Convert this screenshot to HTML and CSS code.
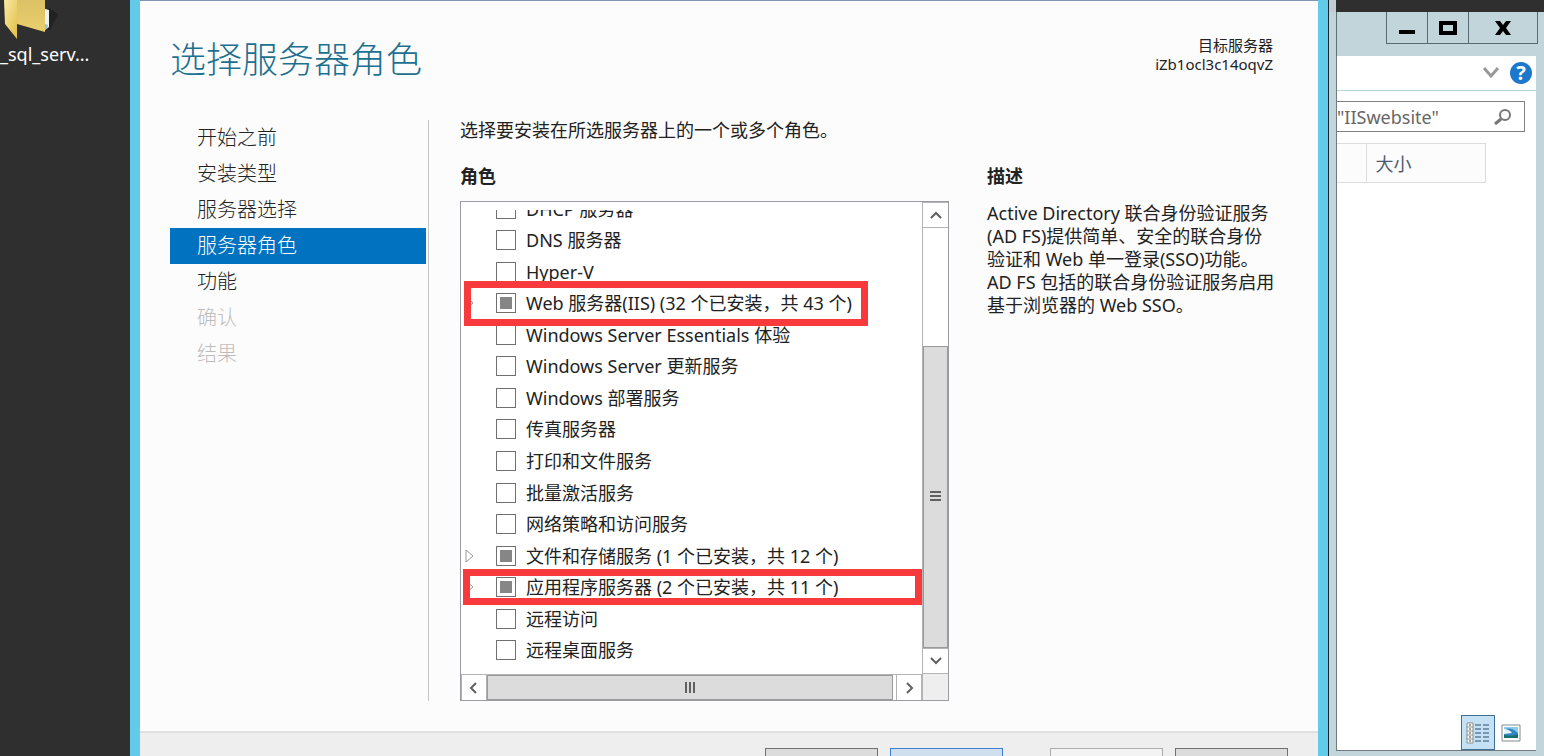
FILE: index.html
```html
<!DOCTYPE html>
<html lang="zh-CN">
<head>
    <meta charset="UTF-8">
    <meta name="viewport" content="width=device-width, initial-scale=1.0">
    <title>选择服务器角色</title>
    <link rel="stylesheet" href="styles.css">
</head>
<body>
    <aside class="desktop">
        <a href="#" class="shortcut">
            <svg width="64" height="40" viewBox="0 0 64 40" aria-hidden="true">
                <defs>
                    <linearGradient id="front" x1="0" y1="0" x2="1" y2="1">
                        <stop offset="0" stop-color="#f9eaa4"/>
                        <stop offset="1" stop-color="#e3bd45"/>
                    </linearGradient>
                    <linearGradient id="back" x1="0" y1="0" x2="0" y2="1">
                        <stop offset="0" stop-color="#dcc067"/>
                        <stop offset="1" stop-color="#ead06c"/>
                    </linearGradient>
                </defs>
                <path d="M49 8l9 6-8 16-20-3z" fill="#222"/>
                <path d="M42 8l7 2v17l-4 3-3-1z" fill="#edf2f2"/>
                <path d="M45 24l3 1-1 4-3 1z" fill="#8fc4d6"/>
                <path d="M17 0h28v32l-28-8z" fill="url(#back)"/>
                <path d="M4 0h13v39L5 24z" fill="url(#front)"/>
            </svg>
            <span>_sql_serv...</span>
        </a>
    </aside>

    <main class="wizard">
        <header class="wizard-header">
            <h1>选择服务器角色</h1>
            <p class="target">目标服务器<br>iZb1ocl3c14oqvZ</p>
        </header>

        <div class="wizard-body">
            <nav class="steps">
                <a href="#">开始之前</a>
                <a href="#">安装类型</a>
                <a href="#">服务器选择</a>
                <a href="#" class="active">服务器角色</a>
                <a href="#">功能</a>
                <a class="disabled">确认</a>
                <a class="disabled">结果</a>
            </nav>

            <section class="roles">
                <p class="intro">选择要安装在所选服务器上的一个或多个角色。</p>
                <h2>角色</h2>
                <div class="role-box">
                    <div class="role-view">
                        <ul class="role-list">
                            <li><label><input type="checkbox">DHCP 服务器</label></li>
                            <li><label><input type="checkbox">DNS 服务器</label></li>
                            <li><label><input type="checkbox">Hyper-V</label></li>
                            <li>
                                <svg class="expander" width="10" height="16" viewBox="0 0 10 16"><path d="M1 2v12l7-6z"/></svg>
                                <label><input type="checkbox" class="partial">Web 服务器(IIS) (32 个已安装，共 43 个)</label>
                                <span class="mark mark-web"></span>
                            </li>
                            <li><label><input type="checkbox">Windows Server Essentials 体验</label></li>
                            <li><label><input type="checkbox">Windows Server 更新服务</label></li>
                            <li><label><input type="checkbox">Windows 部署服务</label></li>
                            <li><label><input type="checkbox">传真服务器</label></li>
                            <li><label><input type="checkbox">打印和文件服务</label></li>
                            <li><label><input type="checkbox">批量激活服务</label></li>
                            <li><label><input type="checkbox">网络策略和访问服务</label></li>
                            <li>
                                <svg class="expander" width="10" height="16" viewBox="0 0 10 16"><path d="M1 2v12l7-6z"/></svg>
                                <label><input type="checkbox" class="partial">文件和存储服务 (1 个已安装，共 12 个)</label>
                            </li>
                            <li>
                                <svg class="expander" width="10" height="16" viewBox="0 0 10 16"><path d="M1 2v12l7-6z"/></svg>
                                <label><input type="checkbox" class="partial">应用程序服务器 (2 个已安装，共 11 个)</label>
                                <span class="mark mark-app"></span>
                            </li>
                            <li><label><input type="checkbox">远程访问</label></li>
                            <li><label><input type="checkbox">远程桌面服务</label></li>
                        </ul>
                    </div>
                    <div class="scroll-v">
                        <button type="button" aria-label="向上滚动"><svg width="14" height="14" viewBox="0 0 14 14"><path d="M2 10l5-5 5 5"/></svg></button>
                        <div class="track"><div class="thumb"><svg width="12" height="13" viewBox="0 0 12 13"><path d="M0 2h11M0 6h11M0 10h11"/></svg></div></div>
                        <button type="button" aria-label="向下滚动"><svg width="14" height="14" viewBox="0 0 14 14"><path d="M2 4l5 5 5-5"/></svg></button>
                    </div>
                    <div class="scroll-h">
                        <button type="button" aria-label="向左滚动"><svg width="14" height="14" viewBox="0 0 14 14"><path d="M9 2L4 7l5 5"/></svg></button>
                        <div class="track"><div class="thumb"><svg width="13" height="12" viewBox="0 0 13 12"><path d="M2 0v11M6 0v11M10 0v11"/></svg></div></div>
                        <button type="button" aria-label="向右滚动"><svg width="14" height="14" viewBox="0 0 14 14"><path d="M5 2l5 5-5 5"/></svg></button>
                    </div>
                    <div class="scroll-corner"></div>
                </div>
            </section>

            <section class="description">
                <h2>描述</h2>
                <p>Active Directory 联合身份验证服务<br>(AD FS)提供简单、安全的联合身份<br>验证和 Web 单一登录(SSO)功能。<br>AD FS 包括的联合身份验证服务启用<br>基于浏览器的 Web SSO。</p>
            </section>
        </div>

        <footer class="wizard-footer">
            <button type="button" aria-label="上一步"></button>
            <button type="button" class="primary" aria-label="下一步"></button>
            <button type="button" class="install" aria-label="安装" disabled></button>
            <button type="button" aria-label="取消"></button>
        </footer>
    </main>

    <aside class="explorer">
        <div class="titlebar">
            <button type="button" aria-label="最小化"><svg width="18" height="16" viewBox="0 0 18 16"><path d="M1 12h16" stroke="#000" stroke-width="4"/></svg></button>
            <button type="button" aria-label="最大化"><svg width="18" height="16" viewBox="0 0 18 16"><path d="M2 3h14v10H2z" fill="none" stroke="#000" stroke-width="4"/></svg></button>
            <button type="button" class="close" aria-label="关闭"><svg width="18" height="16" viewBox="0 0 18 16"><path d="M1 1h5l3 4 3-4h5l-5 7 5 7h-5l-3-4-3 4H1l5-7z"/></svg></button>
        </div>
        <div class="window">
            <div class="ribbon">
                <svg width="18" height="14" viewBox="0 0 18 14"><path d="M2 2l7 8 7-8" fill="none" stroke="#999" stroke-width="3"/></svg>
                <button type="button" class="help" aria-label="帮助">?</button>
            </div>
            <div class="search">
                <input type="text" aria-label="搜索" value="&quot;IISwebsite&quot;">
                <svg width="18" height="18" viewBox="0 0 18 18"><circle cx="11" cy="7" r="5" fill="none" stroke="#777" stroke-width="2"/><path d="M7 11l-6 5" stroke="#777" stroke-width="3"/></svg>
            </div>
            <table class="columns">
                <tr><th></th><th>大小</th></tr>
            </table>
            <div class="views">
                <button type="button" class="selected" aria-label="详细信息">
                    <svg width="24" height="22" viewBox="0 0 24 22">
                        <path d="M1 1h6v20H1z" fill="#fff" stroke="#8a8f86"/>
                        <path d="M1 5h6M1 9h6M1 13h6M1 17h6" stroke="#8a8f86"/>
                        <path d="M3 3h2M3 7h2M3 11h2M3 15h2M3 19h2" stroke="#444"/>
                        <path d="M9 3h6M17 3h6M9 7h6M17 7h6M9 11h6M17 11h6M9 15h6M17 15h6M9 19h6M17 19h6" stroke="#2f4c68"/>
                    </svg>
                </button>
                <button type="button" aria-label="大图标">
                    <svg width="20" height="18" viewBox="0 0 20 18">
                        <path d="M1 1h18v16H1z" fill="#fff" stroke="#848a90"/>
                        <path d="M3 3h14v11H3z" fill="#3287c0"/>
                        <path d="M3 6q6-4 14 3V3H3z" fill="#8dcbed"/>
                        <path d="M3 5q5 0 8 4l-8 1z" fill="#e8f7fc"/>
                        <path d="M3 14v-3q8 2 14-1v4z" fill="#18716d"/>
                    </svg>
                </button>
            </div>
        </div>
    </aside>
</body>
</html>
```
FILE: styles.css
```css
* {
    box-sizing: border-box;
}
body {
    margin: 0;
    height: 100vh;
    overflow: hidden;
    display: flex;
    background-color: #2f2f2f;
    color: #222;
    font-family: "Noto Sans", "Noto Sans CJK SC", sans-serif;
    font-size: 18px;
    font-weight: 400;
}
h1, h2, p, ul {
    margin: 0;
    padding: 0;
}
button {
    padding: 0;
    font: inherit;
}

/* desktop strip */
.desktop {
    flex: 0 0 130px;
}
.shortcut {
    display: block;
    color: #fff;
    text-decoration: none;
    line-height: 28px;
}
.shortcut svg {
    display: block;
}

/* wizard window */
.wizard {
    flex: 1;
    min-width: 0;
    display: flex;
    flex-direction: column;
    background-color: #fcfcfc;
    border: solid #62cbea;
    border-width: 0 10px;
    box-shadow: inset 0 1px #8296b4;
}
.wizard-header {
    flex: 0 0 120px;
    display: flex;
    justify-content: space-between;
    padding: 36px 45px 0 30px;
}
h1 {
    color: #1d7090;
    font-size: 36px;
    line-height: 48px;
    font-weight: 300;
}
.target {
    text-align: right;
    font-size: 15px;
    line-height: 19px;
}
.wizard-body {
    display: flex;
    padding: 0 30px;
}
.steps {
    flex: 0 0 259px;
    display: flex;
    flex-direction: column;
    padding-right: 2px;
    border-right: 1px solid #c4c4c4;
    font-size: 20px;
    font-weight: 300;
    line-height: 36px;
}
.steps a {
    padding-left: 27px;
    color: #222;
    text-decoration: none;
}
.steps .active {
    background-color: #0072c0;
    color: #fff;
}
.steps .disabled {
    color: #bcbcbc;
}
.roles {
    flex: 0 1 489px;
    margin-left: 31px;
}
.intro {
    line-height: 20px;
}
h2 {
    font-size: 18px;
    line-height: 28px;
    font-weight: 700;
}
.roles h2 {
    margin: 22px 0 11px;
}
.role-box {
    display: grid;
    grid-template-columns: minmax(0, 1fr) 26px;
    grid-template-rows: 464px 26px;
    padding-top: 8px;
    border: 1px solid #9a9ca2;
    background-color: #fff;
}
.role-view {
    display: flex;
    flex-direction: column;
    justify-content: flex-end;
    padding-bottom: 8px;
    overflow: hidden;
}
.role-list {
    display: grid;
    grid-auto-rows: 1fr;
    flex: 0 0 473px;
    list-style: none;
}
.role-list li {
    position: relative;
    display: flex;
    align-items: center;
    padding-left: 35px;
    white-space: nowrap;
}
.role-list label {
    display: flex;
    align-items: center;
    gap: 10px;
    line-height: 24px;
}
.role-list input {
    appearance: none;
    display: grid;
    place-items: center;
    width: 20px;
    height: 20px;
    margin: 0;
    border: 1px solid #707070;
    background-color: #fff;
}
.role-list .partial::before {
    content: "";
    width: 12px;
    height: 12px;
    background-color: #868686;
}
.expander {
    position: absolute;
    left: 4px;
    fill: #fff;
    stroke: #999;
}
.mark {
    position: absolute;
    z-index: 1;
    border: 7px solid #f83a3c;
}
.mark-web {
    inset: -7px 54px -7px 3px;
}
.mark-app {
    inset: -2px 0 -2px 2px;
}

/* scroll bars */
.scroll-v, .scroll-h {
    display: flex;
    background-color: #fff;
}
.scroll-v {
    flex-direction: column;
    margin-top: -8px;
    border-left: 1px solid #b4b4b4;
}
.scroll-h {
    border-top: 1px solid #b4b4b4;
}
.scroll-v button, .scroll-h button {
    flex: 0 0 26px;
    display: grid;
    place-items: center;
    border: 1px solid #b4b4b4;
    background-color: #fff;
}
.scroll-v button {
    border-width: 1px 0;
}
.scroll-h button {
    border-width: 0 1px;
}
.scroll-v svg, .scroll-h svg {
    fill: none;
    stroke: #606060;
    stroke-width: 2;
}
.track {
    flex: 1;
    display: flex;
}
.scroll-v .track {
    align-items: flex-end;
}
.scroll-h .track {
    padding-right: 3px;
}
.thumb {
    display: grid;
    place-items: center;
    width: 100%;
    border: 1px solid #999;
    background-color: #dcdcdc;
}
.scroll-v .thumb {
    height: 72%;
}
.scroll-corner {
    border: solid #b4b4b4;
    border-width: 0 0 0 1px;
    background-color: #eee;
}

.description {
    flex: 1;
    min-width: 0;
    margin: 42px 0 0 38px;
}
.description p {
    margin-top: 12px;
    line-height: 23px;
    white-space: nowrap;
}

.wizard-footer {
    flex: 1 0 60px;
    display: flex;
    justify-content: flex-end;
    align-items: flex-start;
    gap: 12px;
    margin-top: 30px;
    padding: 15px 30px;
    border-top: 2px solid #e0e0e0;
    background-color: #eee;
}
.wizard-footer button {
    width: 113px;
    height: 32px;
    border: 1px solid #707070;
    background-color: #dcdcdc;
}
.wizard-footer .primary {
    border-color: #3c7fcf;
    background-color: #cfdfee;
}
.wizard-footer .install {
    margin-left: 35px;
    border-color: #acacac;
    background-color: #f3f3f3;
}

/* file explorer behind the wizard */
.explorer {
    flex: 0 0 216px;
    min-width: 0;
    display: flex;
    flex-direction: column;
    border-left: 1px solid #16262e;
    background: linear-gradient(to right, #c0ced2 7px, #2f2f2f 7px) top / 100% 12px no-repeat #c2d5da;
    padding-top: 12px;
}
.titlebar {
    display: flex;
    justify-content: flex-end;
    height: 44px;
    margin: 0 6px 0 7px;
    border-left: 1px solid #607078;
}
.titlebar button {
    display: grid;
    place-items: center;
    width: 41px;
    height: 32px;
    border: 1px solid #566a72;
    border-width: 0 0 1px 1px;
    background-color: transparent;
}
.titlebar .close {
    width: 70px;
    border-right-width: 1px;
}
.window {
    flex: 1;
    display: flex;
    flex-direction: column;
    margin: 0 8px 5px 7px;
    border: solid #707a80;
    border-width: 0 0 1px 1px;
    background-color: #fff;
}
.ribbon {
    display: flex;
    justify-content: flex-end;
    align-items: center;
    gap: 10px;
    height: 35px;
    padding-right: 4px;
    border-bottom: 1px solid #b8d3df;
}
.help {
    width: 22px;
    height: 22px;
    border: 0;
    border-radius: 50%;
    background-color: #1c78cc;
    color: #fff;
    font-size: 20px;
    font-weight: 700;
    line-height: 22px;
}
.search {
    display: flex;
    align-items: center;
    height: 31px;
    margin: 10px 11px 0 0;
    padding-right: 12px;
    border: 1px solid #808080;
    border-left: 0;
}
.search input {
    flex: 1;
    width: 0;
    padding: 0;
    border: 0;
    background: none;
    color: #666;
    font: inherit;
}
.columns {
    width: 149px;
    margin-top: 11px;
    border-collapse: collapse;
    table-layout: fixed;
}
.columns th {
    height: 39px;
    padding: 0 9px;
    border: 1px solid #dcdcdc;
    background-color: #fcfcfc;
    color: #4c5a70;
    font-weight: 400;
    text-align: left;
}
.columns th:first-child {
    width: 29px;
    border-left: 0;
}
.views {
    display: flex;
    justify-content: flex-end;
    gap: 1px;
    margin-top: auto;
    padding-right: 10px;
}
.views button {
    display: grid;
    place-items: center;
    width: 30px;
    height: 35px;
    border: 0;
    background: none;
}
.views .selected {
    width: 34px;
    border: 1px solid #3f6f94;
    background-color: #c5e1f5;
}
```
